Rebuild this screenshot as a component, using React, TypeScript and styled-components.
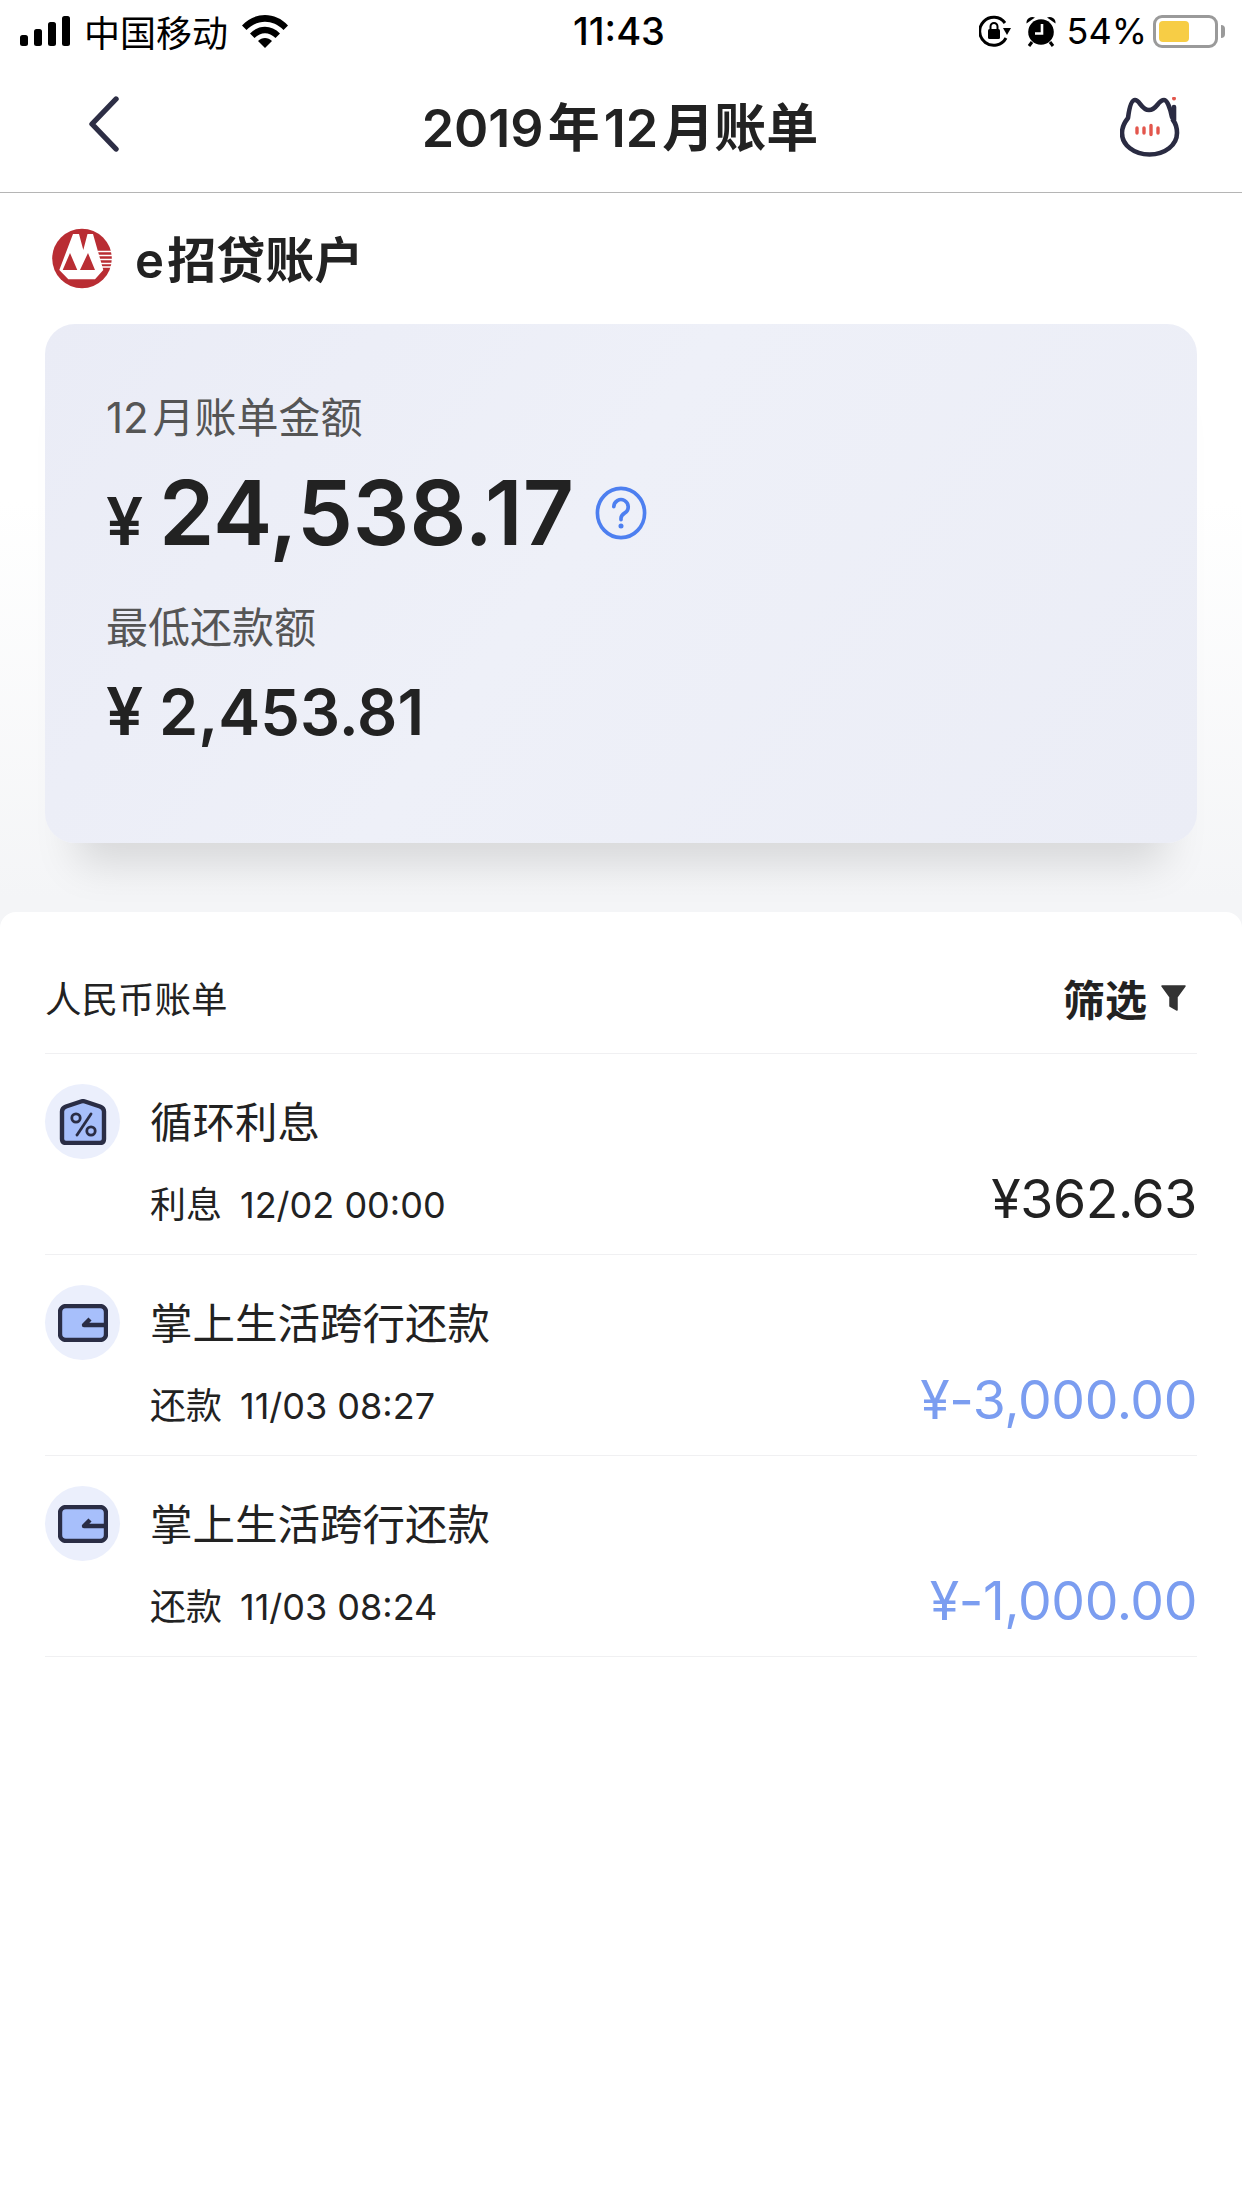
import React from 'react';
import styled, { createGlobalStyle } from 'styled-components';

const FONT = `Inter, "Noto Sans CJK SC", "Noto Sans", sans-serif`;

const GlobalStyle = createGlobalStyle`
	html, body {
		margin: 0;
		padding: 0;
		background: #fff;
	}
	* {
		box-sizing: border-box;
	}
`;

const bills = [
	{ title: '循环利息', kind: '利息', date: '12/02 00:00', amount: '¥362.63', icon: 'percent', refund: false },
	{ title: '掌上生活跨行还款', kind: '还款', date: '11/03 08:27', amount: '¥-3,000.00', icon: 'wallet', refund: true },
	{ title: '掌上生活跨行还款', kind: '还款', date: '11/03 08:24', amount: '¥-1,000.00', icon: 'wallet', refund: true },
];

function SignalIcon() {
	return (
		<svg width="50" height="30" viewBox="0 0 50 30">
			<rect x="0" y="19" width="8" height="11" rx="2.5" fill="#000" />
			<rect x="14" y="13" width="8" height="17" rx="2.5" fill="#000" />
			<rect x="28" y="6" width="8" height="24" rx="2.5" fill="#000" />
			<rect x="42" y="0" width="8" height="30" rx="2.5" fill="#000" />
		</svg>
	);
}

function WifiIcon() {
	return (
		<svg width="46" height="33" viewBox="0 0 46 33">
			<path d="M0 10.5C12.5 -3.5 33.5 -3.5 46 10.5L41.5 15C31 4 15 4 4.5 15Z" fill="#000" />
			<path d="M8 18.5C16.5 9.5 29.5 9.5 38 18.5L33.5 23C27 16.5 19 16.5 12.5 23Z" fill="#000" />
			<path d="M16 26C20 22 26 22 30 26L23 33Z" fill="#000" />
		</svg>
	);
}

function RotationLockIcon() {
	return (
		<svg width="32" height="32" viewBox="0 0 32 32">
			<path d="M26 8A14 14 0 1 0 27 23" fill="none" stroke="#000" strokeWidth="3" />
			<path d="M24 13h8l-4 7z" fill="#000" />
			<rect x="9" y="14" width="12" height="10" rx="1.5" fill="#000" />
			<path d="M11.5 14v-2.5a3.5 3.5 0 0 1 7 0V14" fill="none" stroke="#000" strokeWidth="2" />
		</svg>
	);
}

function AlarmIcon() {
	return (
		<svg width="30" height="32" viewBox="0 0 30 32">
			<circle cx="15" cy="17" r="12.8" fill="#000" />
			<path d="M0.5 8.5a6 6 0 0 1 8.5-6zM29.5 8.5a6 6 0 0 0-8.5-6z" fill="#000" />
			<path d="M6 27l-3 4M24 27l3 4" stroke="#000" strokeWidth="3" />
			<path d="M16 9v9.5H9" fill="none" stroke="#fff" strokeWidth="2.6" />
		</svg>
	);
}

function BackIcon() {
	return (
		<svg width="32" height="56" viewBox="0 0 32 56">
			<path d="M28 3L4 28l24 25" fill="none" stroke="#2d2e45" strokeWidth="5.4" strokeLinecap="round" strokeLinejoin="round" />
		</svg>
	);
}

function CatIcon() {
	return (
		<svg width="60" height="60" viewBox="0 0 60 60">
			<path
				d="M53 23C56 27 57 31 57 36C57 48 45 57.5 29.5 57.5C14 57.5 2 48 2 36C2 30 4 26 8 21C9 13 11 3 15 3C20 3 21 13 29 13C37 13 38 3 44 3C47 3 50 10 52 20"
				fill="none"
				stroke="#2a2b42"
				strokeWidth="4.6"
				strokeLinecap="round"
				strokeLinejoin="round"
			/>
			<path d="M54 10V23" stroke="#2a2b42" strokeWidth="4.6" strokeLinecap="round" />
			<circle cx="54" cy="1.6" r="2" fill="#e3564c" />
			<g stroke="#e3564c" strokeWidth="3.4" strokeLinecap="round">
				<path d="M17 31v5M24 31v5M31 28.5v9M38 31v5" />
			</g>
		</svg>
	);
}

function BankLogo() {
	return (
		<svg width="61" height="62" viewBox="0 0 61 62">
			<circle cx="30" cy="30.5" r="29.8" fill="#b92d33" />
			<path d="M7.3 42L21 6H27L31.3 22L35.5 6H41L51.3 42L43 51.3H16.3Z" fill="#fff" />
			<path d="M18 25L25.3 42H10.7ZM36 25L43 42H28Z" fill="#b92d33" />
			<path d="M46 23.5h14M46 27.5h14.5M47 31.5h13.5M48 35.5h12M49 39h10" stroke="#fff" strokeWidth="1.7" />
		</svg>
	);
}

function HelpIcon() {
	return (
		<svg width="52" height="54" viewBox="0 0 54 56">
			<ellipse cx="27" cy="28" rx="24.5" ry="25.5" fill="none" stroke="#4d7ff0" strokeWidth="3.8" />
			<path d="M19.5 21.5a7.5 7.5 0 1 1 11.5 6.4c-2.6 1.7-4 3-4 5.6v1.5" fill="none" stroke="#4d7ff0" strokeWidth="3.8" strokeLinecap="round" />
			<circle cx="27" cy="41.5" r="2.6" fill="#4d7ff0" />
		</svg>
	);
}

function FilterIcon() {
	return (
		<svg width="25" height="26" viewBox="0 0 25 26">
			<path d="M1 1h23l-8 11v13l-7-4v-9z" fill="#333" stroke="#333" strokeWidth="1.5" strokeLinejoin="round" />
		</svg>
	);
}

function PercentIcon() {
	return (
		<svg width="48" height="46" viewBox="0 0 48 46">
			<path
				d="M3 12.5C3 10 4.5 8.5 7 7.5L22 2.5C23.4 2 24.6 2 26 2.5L41 7.5C43.5 8.5 45 10 45 12.5V40C45 42.5 43.5 44 41 44H7C4.5 44 3 42.5 3 40Z"
				fill="#a7bffb"
				stroke="#2a2d45"
				strokeWidth="4.4"
				strokeLinejoin="round"
			/>
			<circle cx="17" cy="19" r="4.2" fill="none" stroke="#2a2d45" strokeWidth="2.8" />
			<circle cx="32" cy="32" r="4.2" fill="none" stroke="#2a2d45" strokeWidth="2.8" />
			<path d="M32 15L18 36" stroke="#2a2d45" strokeWidth="2.8" strokeLinecap="round" />
		</svg>
	);
}

function WalletIcon() {
	return (
		<svg width="50" height="38" viewBox="0 0 50 38">
			<rect x="2" y="2" width="46" height="34" rx="6" fill="#a7bffb" stroke="#2a2d45" strokeWidth="4.4" />
			<path d="M48 21H26l6-6" fill="none" stroke="#2a2d45" strokeWidth="4.4" strokeLinejoin="round" />
		</svg>
	);
}

export default function App() {
	return (
		<Page>
			<GlobalStyle />
			<StatusBar>
				<StatusLeft>
					<SignalIcon />
					<Carrier>中国移动</Carrier>
					<WifiIcon />
				</StatusLeft>
				<Clock>11:43</Clock>
				<StatusRight>
					<StatusIcons>
						<RotationLockIcon />
						<AlarmIcon />
					</StatusIcons>
					<BatteryText>54%</BatteryText>
					<Battery>
						<BatteryFill />
					</Battery>
				</StatusRight>
			</StatusBar>

			<NavBar>
				<BackIcon />
				<NavTitle>2019 年 12 月账单</NavTitle>
				<CatSlot>
					<CatIcon />
				</CatSlot>
			</NavBar>

			<Hero>
				<AccountRow>
					<BankLogo />
					<AccountName>e 招贷账户</AccountName>
				</AccountRow>

				<SummaryCard>
					<SummaryLabel>12 月账单金额</SummaryLabel>
					<TotalRow>
						<Yen>¥</Yen>
						<TotalValue>24,538.17</TotalValue>
						<HelpSlot>
							<HelpIcon />
						</HelpSlot>
					</TotalRow>
					<MinLabel>最低还款额</MinLabel>
					<MinRow>
						<Yen>¥</Yen>
						<MinValue>2,453.81</MinValue>
					</MinRow>
				</SummaryCard>
			</Hero>

			<Sheet>
				<SheetHeader>
					<SheetTitle>人民币账单</SheetTitle>
					<FilterButton>
						筛选
						<FilterIcon />
					</FilterButton>
				</SheetHeader>

				{bills.map((bill, i) => (
					<BillRow key={i}>
						<BillTop>
							<IconCircle>{bill.icon === 'percent' ? <PercentIcon /> : <WalletIcon />}</IconCircle>
							<BillTitle>{bill.title}</BillTitle>
						</BillTop>
						<BillBottom>
							<BillMeta>
								<span>{bill.kind}</span>
								<span>{bill.date}</span>
							</BillMeta>
							<BillAmount $refund={bill.refund}>{bill.amount}</BillAmount>
						</BillBottom>
					</BillRow>
				))}
			</Sheet>
		</Page>
	);
}

const Page = styled.div`
	width: 1242px;
	height: 2208px;
	overflow: hidden;
	background: #fff;
	font-family: ${FONT};
	color: #222;
`;

const StatusBar = styled.div`
	height: 62px;
	padding: 0 24px 0 20px;
	display: grid;
	grid-template-columns: 1fr auto 1fr;
	align-items: center;
	color: #000;
`;

const StatusLeft = styled.div`
	display: flex;
	align-items: center;
	gap: 14px;
`;

const Carrier = styled.span`
	font-size: 36px;
`;

const Clock = styled.span`
	font-size: 38px;
	font-weight: 500;
`;

const StatusRight = styled.div`
	display: flex;
	align-items: center;
	justify-content: flex-end;
	gap: 13px;
`;

const StatusIcons = styled.div`
	display: flex;
	align-items: center;
	gap: 15px;
	margin-right: -2px;
`;

const BatteryText = styled.span`
	font-size: 36px;
	margin-right: -7px;
`;

const Battery = styled.div`
	position: relative;
	width: 65px;
	height: 33px;
	border: 3px solid #9a9a9a;
	border-radius: 9px;
	padding: 3px;

	&::after {
		content: '';
		position: absolute;
		right: -10px;
		top: 7px;
		width: 4px;
		height: 13px;
		border-radius: 0 4px 4px 0;
		background: #9a9a9a;
	}
`;

const BatteryFill = styled.div`
	width: 30px;
	height: 100%;
	border-radius: 4px;
	background: #f7cd45;
`;

const NavBar = styled.div`
	height: 131px;
	padding: 0 62px 6px 88px;
	display: flex;
	align-items: center;
	justify-content: space-between;
	border-bottom: 1.5px solid #b5b5b5;
`;

const NavTitle = styled.h1`
	margin: 0;
	font-size: 52px;
	font-weight: 600;
	word-spacing: -9px;
	color: #222;
`;

const CatSlot = styled.div`
	display: flex;
	padding-top: 6px;
`;

const Hero = styled.div`
	height: 735px;
	padding: 0 45px;
	background: linear-gradient(to bottom, #fff 0, #fff 42%, #f4f5f7 96%);
`;

const AccountRow = styled.div`
	height: 131px;
	padding: 0 0 0 7px;
	display: flex;
	align-items: center;
	gap: 22px;
`;

const AccountName = styled.h2`
	margin: 0 0 4px;
	font-size: 49px;
	font-weight: 600;
	word-spacing: -9px;
`;

const SummaryCard = styled.div`
	height: 519px;
	padding: 64px 61px 0;
	border-radius: 30px;
	background: linear-gradient(125deg, #eaecf6 0%, #eef0f8 45%, #ebedf6 100%);
	box-shadow: 0 52px 40px -32px rgba(0, 0, 0, 0.13);
`;

const SummaryLabel = styled.div`
	font-size: 42px;
	line-height: 60px;
	color: #555;
	word-spacing: -8px;
`;

const MinLabel = styled(SummaryLabel)`
	margin-top: 35px;
`;

const TotalRow = styled.div`
	margin-top: 15px;
	height: 100px;
	display: flex;
	align-items: baseline;
`;

const Yen = styled.span`
	width: 53px;
	font-size: 66px;
	font-weight: 600;
`;

const TotalValue = styled.span`
	font-size: 89px;
	line-height: 100px;
	font-weight: 600;
	margin-right: 21px;
`;

const HelpSlot = styled.span`
	align-self: center;
	display: flex;
`;

const MinRow = styled.div`
	margin-top: 13px;
	height: 80px;
	display: flex;
	align-items: baseline;
`;

const MinValue = styled.span`
	font-size: 63px;
	line-height: 80px;
	font-weight: 600;
`;

const Sheet = styled.div`
	position: relative;
	height: 1312px;
	margin-top: -16px;
	padding: 0 45px;
	background: #fff;
	border-radius: 16px 16px 0 0;
`;

const SheetHeader = styled.div`
	height: 142px;
	padding-top: 30px;
	display: flex;
	align-items: center;
	justify-content: space-between;
	border-bottom: 1px solid #f0f0f2;
`;

const SheetTitle = styled.span`
	font-size: 36.5px;
	color: #222;
`;

const FilterButton = styled.span`
	display: flex;
	align-items: center;
	gap: 14px;
	font-size: 42px;
	font-weight: 600;
	padding-right: 11px;
`;

const BillRow = styled.div`
	height: 201px;
	padding-top: 30px;
	border-bottom: 1px solid #f0f0f2;
`;

const BillTop = styled.div`
	display: flex;
	align-items: center;
	gap: 30px;
`;

const IconCircle = styled.div`
	width: 75px;
	height: 75px;
	border-radius: 50%;
	background: #ebeffc;
	display: flex;
	align-items: center;
	justify-content: center;
`;

const BillTitle = styled.span`
	font-size: 42.5px;
	color: #222;
	margin-bottom: 5px;
`;

const BillBottom = styled.div`
	margin-top: 9px;
	padding-left: 105px;
	height: 60px;
	display: flex;
	align-items: center;
	justify-content: space-between;
`;

const BillMeta = styled.div`
	display: flex;
	align-items: baseline;
	gap: 18px;
	font-size: 36px;
	padding-top: 8px;
	color: #222;
`;

const BillAmount = styled.span<{ $refund: boolean }>`
	font-size: 53.5px;
	letter-spacing: -0.4px;
	color: ${(p) => (p.$refund ? '#7b9df0' : '#222')};
`;
